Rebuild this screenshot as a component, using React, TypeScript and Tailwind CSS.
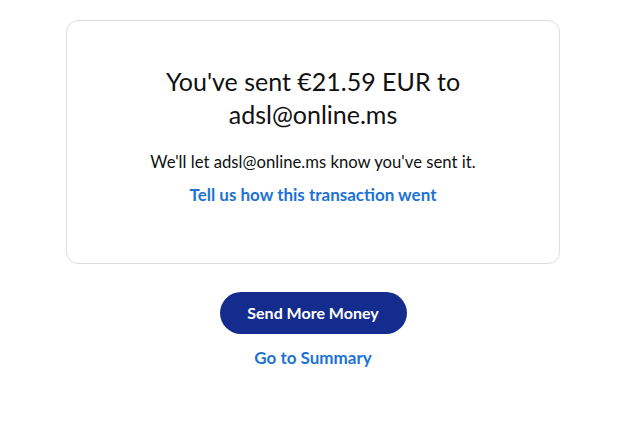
export default function App() {
  return (
    <div
      className="min-h-[448px] w-full bg-white pt-5 pl-2"
      style={{ fontFamily: 'Lato, "Open Sans", sans-serif' }}
    >
      <div className="mx-auto flex w-[494px] flex-col items-center rounded-xl border border-[#dedede] px-10 pt-[44px] pb-[58px] text-center">
        <h1 className="text-[25px] leading-[33px] font-normal text-[#111]">
          You've sent €21.59 EUR to
          <br />
          adsl@online.ms
        </h1>
        <p className="mt-[21px] text-[16.7px] leading-5 text-[#111]">
          We'll let adsl@online.ms know you've sent it.
        </p>
        <a href="#" className="mt-[13px] text-[17px] leading-5 font-bold text-[#1d72d6]">
          Tell us how this transaction went
        </a>
      </div>
      <div className="mt-[28px] flex flex-col items-center">
        <button className="h-[42px] w-[187px] rounded-full bg-[#142c8e] text-[16px] font-bold text-white">
          Send More Money
        </button>
        <a href="#" className="mt-[14px] text-[17px] leading-5 font-bold text-[#1d72d6]">
          Go to Summary
        </a>
      </div>
    </div>
  )
}
